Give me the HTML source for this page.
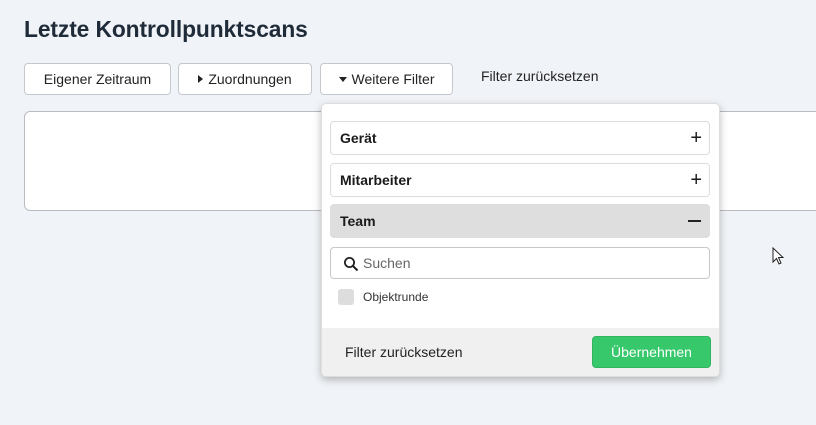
<!DOCTYPE html>
<html><head><meta charset="utf-8"><style>
*{box-sizing:border-box;margin:0;padding:0}
body{width:816px;height:425px;background:#f0f3f7;font-family:"Liberation Sans",Arial,sans-serif;position:relative;overflow:hidden;color:#222}
.abs{position:absolute}
h1{position:absolute;left:24px;top:16px;font-size:22.8px;font-weight:bold;color:#1f2b38;letter-spacing:-0.1px}
.btn{position:absolute;top:63px;height:32px;background:#fff;border:1px solid #c4c7cc;border-radius:4px;font-size:14px;color:#222;display:flex;align-items:center;justify-content:center;gap:5px}
.tri-r{width:0;height:0;border-top:4px solid transparent;border-bottom:4px solid transparent;border-left:5px solid #222}
.tri-d{width:0;height:0;border-left:4px solid transparent;border-right:4px solid transparent;border-top:5px solid #222}
.card{left:24px;top:111px;width:820px;height:100px;background:#fff;border:1px solid #b9bcc0;border-radius:6px}
.dd{left:321px;top:103px;width:399px;height:274px;background:#fff;border:1px solid #ddd;border-radius:5px;box-shadow:0 3px 8px rgba(0,0,0,.25);overflow:hidden}
.row{position:absolute;left:8px;width:380px;height:34px;border:1px solid #dcdcdc;border-radius:4px;background:#fff;font-size:14px;font-weight:bold;color:#1a1a1a;padding-left:9px;display:flex;align-items:center}
.row span.s{position:absolute;right:7px;top:7px;font-weight:normal;font-size:20px;line-height:18px}
.foot{position:absolute;left:0;bottom:0;width:100%;height:48px;background:#f0f0f0}
</style></head><body>
<h1>Letzte Kontrollpunktscans</h1>
<div class="btn" style="left:24px;width:147px">Eigener Zeitraum</div>
<div class="btn" style="left:178px;width:134px"><i class="tri-r"></i>Zuordnungen</div>
<div class="btn" style="left:320px;width:133px"><i class="tri-d"></i>Weitere Filter</div>
<div class="abs" style="left:481px;top:68px;font-size:14px;color:#222">Filter zurücksetzen</div>
<div class="abs card"></div>
<svg class="abs" style="left:772px;top:247px" width="14" height="20" viewBox="0 0 14 20"><path d="M1 1 L1 15 L4.5 11.5 L7 17 L9 16 L6.5 10.5 L11 10.5 Z" fill="#fff" stroke="#222" stroke-width="1"/></svg>
<div class="abs dd">
 <div class="row" style="top:17px">Gerät<span class="s">+</span></div>
 <div class="row" style="top:59px">Mitarbeiter<span class="s">+</span></div>
 <div class="row" style="top:100px;background:#dedede;border-color:#dedede">Team<span style="position:absolute;right:8px;top:15px;width:13px;height:2px;background:#222"></span></div>
 <div class="row" style="top:143px;height:32px;font-weight:normal;color:#666;border-color:#c8c8c8;padding-left:32px">Suchen
  <svg style="position:absolute;left:12px;top:8px" width="16" height="16" viewBox="0 0 16 16"><circle cx="6.5" cy="6.5" r="4.6" fill="none" stroke="#222" stroke-width="1.8"/><path d="M10 10 L14.5 14.5" stroke="#222" stroke-width="2"/></svg></div>
 <div class="abs" style="left:16px;top:185px;width:16px;height:16px;background:#ddd;border-radius:3px"></div>
 <div class="abs" style="left:41px;top:186px;font-size:12px;color:#333">Objektrunde</div>
 <div class="foot">
  <div class="abs" style="left:23px;top:16px;font-size:14px;color:#222">Filter zurücksetzen</div>
  <div class="abs" style="left:270px;top:8px;width:119px;height:32px;background:#36c86b;border:1px solid #2fb45f;border-radius:4px;color:#fff;font-size:14px;display:flex;align-items:center;justify-content:center">Übernehmen</div>
 </div>
</div>
</body></html>
